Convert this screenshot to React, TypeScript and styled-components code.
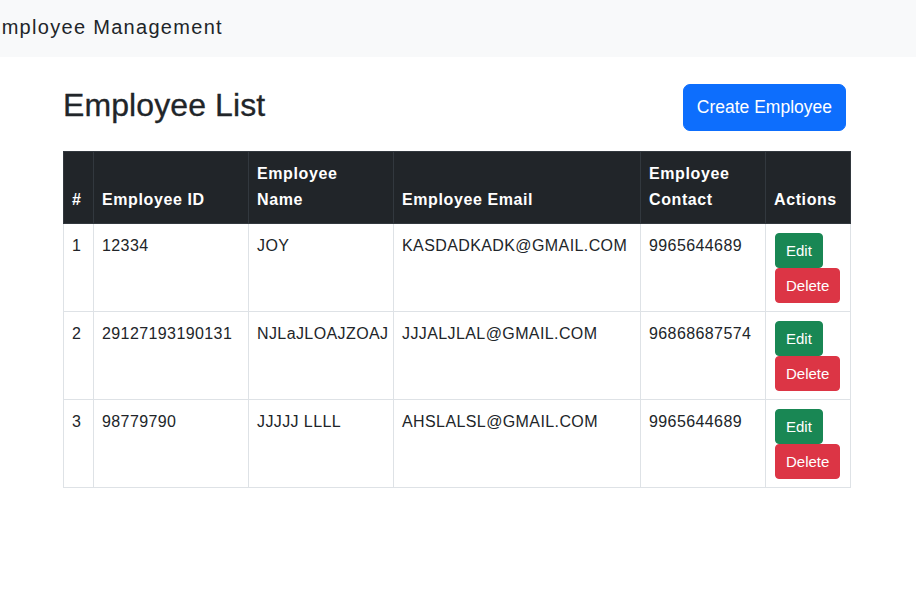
import React from 'react';
import styled, { createGlobalStyle } from 'styled-components';

interface Employee {
  id: string;
  name: string;
  email: string;
  contact: string;
}

const employees: Employee[] = [
  { id: '12334', name: 'JOY', email: 'KASDADKADK@GMAIL.COM', contact: '9965644689' },
  { id: '29127193190131', name: 'NJLaJLOAJZOAJ', email: 'JJJALJLAL@GMAIL.COM', contact: '96868687574' },
  { id: '98779790', name: 'JJJJJ LLLL', email: 'AHSLALSL@GMAIL.COM', contact: '9965644689' },
];

const columns = [30, 155, 145, 247, 125, 85];

const GlobalStyle = createGlobalStyle`
  body {
    margin: 0;
    background: #fff;
    color: #212529;
    font-family: "Liberation Sans", Arial, sans-serif;
    font-size: 16px;
    line-height: 1.5;
  }
`;

const Navbar = styled.nav`
  height: 57px;
  background-color: #f8f9fa;
  display: flex;
  align-items: center;
  overflow: hidden;
`;

const Brand = styled.span`
  margin-left: -13px;
  margin-top: -4px;
  font-size: 20px;
  letter-spacing: 1.3px;
  color: #212529;
  white-space: nowrap;
`;

const Container = styled.main`
  width: 787px;
  margin: 27px 0 0 63px;
`;

const Header = styled.div`
  display: flex;
  justify-content: space-between;
  align-items: center;
  margin-bottom: 20px;
`;

const Title = styled.h2`
  margin: -4px 0 0;
  font-size: 32px;
  font-weight: 500;
  line-height: 1.2;
  letter-spacing: 0.1px;
  -webkit-text-stroke: 0.3px #212529;
`;

const PrimaryButton = styled.button`
  height: 47px;
  margin-right: 4px;
  padding: 0 13px;
  border: 1px solid #0d6efd;
  border-radius: 7px;
  background-color: #0d6efd;
  color: #fff;
  font-family: inherit;
  font-size: 17.5px;
  cursor: pointer;
`;

const Table = styled.table`
  width: 787px;
  table-layout: fixed;
  border-collapse: collapse;
`;

const HeadCell = styled.th`
  background-color: #212529;
  color: #fff;
  border: 1px solid #32383e;
  padding: 9px 8px 10px;
  line-height: 26px;
  text-align: left;
  vertical-align: bottom;
  font-weight: bold;
  letter-spacing: 0.6px;
`;

const Cell = styled.td`
  border: 1px solid #dee2e6;
  padding: 9px 8px 8px;
  line-height: 26px;
  vertical-align: top;
  letter-spacing: 0.4px;
  white-space: nowrap;
`;

const Actions = styled.div`
  display: flex;
  flex-direction: column;
  align-items: flex-start;
  margin-left: 1px;
`;

const SmallButton = styled.button<{ $variant: 'success' | 'danger' }>`
  height: 35px;
  padding: 0 10px;
  border: 1px solid ${p => (p.$variant === 'success' ? '#198754' : '#dc3545')};
  border-radius: 4px;
  background-color: ${p => (p.$variant === 'success' ? '#198754' : '#dc3545')};
  color: #fff;
  font-family: inherit;
  font-size: 15px;
  cursor: pointer;
`;

export default function App() {
  return (
    <>
      <GlobalStyle />
      <Navbar>
        <Brand>Employee Management</Brand>
      </Navbar>
      <Container>
        <Header>
          <Title>Employee List</Title>
          <PrimaryButton>Create Employee</PrimaryButton>
        </Header>
        <Table>
          <colgroup>
            {columns.map((w, i) => (
              <col key={i} width={w} />
            ))}
          </colgroup>
          <thead>
            <tr>
              <HeadCell>#</HeadCell>
              <HeadCell>Employee ID</HeadCell>
              <HeadCell>
                Employee
                <br />
                Name
              </HeadCell>
              <HeadCell>Employee Email</HeadCell>
              <HeadCell>
                Employee
                <br />
                Contact
              </HeadCell>
              <HeadCell>Actions</HeadCell>
            </tr>
          </thead>
          <tbody>
            {employees.map((e, i) => (
              <tr key={e.id}>
                <Cell>{i + 1}</Cell>
                <Cell>{e.id}</Cell>
                <Cell>{e.name}</Cell>
                <Cell>{e.email}</Cell>
                <Cell>{e.contact}</Cell>
                <Cell>
                  <Actions>
                    <SmallButton $variant="success">Edit</SmallButton>
                    <SmallButton $variant="danger">Delete</SmallButton>
                  </Actions>
                </Cell>
              </tr>
            ))}
          </tbody>
        </Table>
      </Container>
    </>
  );
}
